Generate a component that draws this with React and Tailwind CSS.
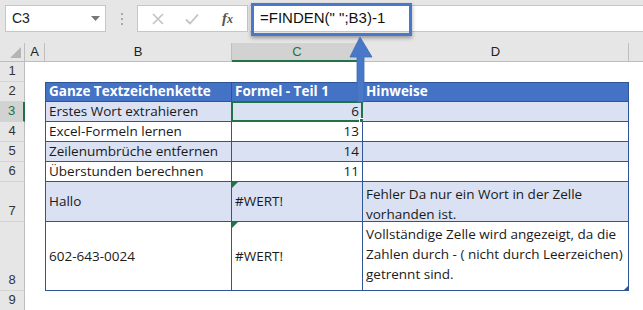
import React from 'react'

const COLS = [
  { key: 'A', w: 'w-[20px]' },
  { key: 'B', w: 'w-[187px]' },
  { key: 'C', w: 'w-[131px]' },
  { key: 'D', w: 'w-[266px]' },
]

const rows = [
  { n: 1, h: 'h-[20px]' },
  { n: 2, h: 'h-[20px]', head: true },
  { n: 3, h: 'h-[20px]', band: true, b: 'Erstes Wort extrahieren', c: '6' },
  { n: 4, h: 'h-[20px]', b: 'Excel-Formeln lernen', c: '13' },
  { n: 5, h: 'h-[20px]', band: true, b: 'Zeilenumbrüche entfernen', c: '14' },
  { n: 6, h: 'h-[20px]', b: 'Überstunden berechnen', c: '11' },
  {
    n: 7,
    h: 'h-[40px]',
    band: true,
    b: 'Hallo',
    c: '#WERT!',
    err: true,
    d: ['Fehler Da nur ein Wort in der Zelle', 'vorhanden ist.'],
  },
  {
    n: 8,
    h: 'h-[69px]',
    b: '602-643-0024',
    c: '#WERT!',
    err: true,
    d: [
      'Vollständige Zelle wird angezeigt, da die',
      'Zahlen durch - ( nicht durch Leerzeichen)',
      'getrennt sind.',
    ],
  },
  { n: 9, h: 'h-[20px]' },
]

const cellFont = "font-['Open_Sans',sans-serif] text-[13.5px] text-[#1a1a1a]"

const RowHeader = ({ n, h }) => {
  const active = n === 3
  return (
    <div
      className={`${h} w-[25px] shrink-0 flex items-end justify-center pb-[1px] border-b border-[#d4d4d4] font-['Liberation_Sans',sans-serif] text-[13px] ${
        active
          ? 'bg-[#d2d2d2] text-[#217346] border-r-2 border-r-[#217346]'
          : 'bg-[#e6e6e6] text-[#333] border-r border-r-[#bdbdbd]'
      }`}
    >
      {n}
    </div>
  )
}

const TableRow = ({ row }) => {
  if (!row.head && !row.b) {
    return <div className="flex-1" />
  }
  const bg = row.head ? 'bg-[#4472c4]' : row.band ? 'bg-[#d9e1f2]' : 'bg-white'
  const border = `border-[#2f5597] border-b border-r ${row.head ? 'border-t' : ''}`
  const tall = row.n >= 7

  if (row.head) {
    return (
      <>
        <div className={`w-[187px] shrink-0 ${bg} ${border} border-l flex items-end px-[3px] text-white font-bold font-['Open_Sans',sans-serif] text-[13.5px]`}>
          Ganze Textzeichenkette
        </div>
        <div className={`w-[131px] shrink-0 ${bg} ${border} flex items-end px-[3px] text-white font-bold font-['Open_Sans',sans-serif] text-[13.5px]`}>
          Formel - Teil 1
        </div>
        <div className={`w-[266px] shrink-0 ${bg} ${border} flex items-end px-[3px] text-white font-bold font-['Open_Sans',sans-serif] text-[13.5px]`}>
          Hinweise
        </div>
      </>
    )
  }

  return (
    <>
      <div className={`w-[187px] shrink-0 ${bg} ${border} border-l flex ${tall ? 'items-center' : 'items-end'} px-[3px] ${cellFont} whitespace-nowrap leading-[19px]`}>
        {row.b}
      </div>
      <div className={`relative w-[131px] shrink-0 ${bg} ${border} flex ${tall ? 'items-center justify-start' : 'items-end justify-end'} px-[3px] ${cellFont} leading-[19px]`}>
        {row.c}
        {row.err && (
          <div className="absolute left-0 top-0 w-0 h-0 border-t-[6px] border-t-[#217346] border-r-[6px] border-r-transparent" />
        )}
        {row.n === 3 && (
          <>
            <div className="absolute -left-[1px] -top-[1px] -right-[1px] -bottom-[1px] border-2 border-[#217346]" />
            <div className="absolute -right-[4px] -bottom-[4px] w-[7px] h-[7px] bg-[#217346] border border-white" />
          </>
        )}
      </div>
      <div className={`relative w-[266px] shrink-0 ${bg} ${border} px-[3px] pt-[2px] ${cellFont} leading-[20px] whitespace-nowrap`}>
        {row.d && row.d.map((line, i) => <div key={i}>{line}</div>)}
        {row.n === 8 && (
          <div className="absolute right-0 bottom-0 w-0 h-0 border-b-[4px] border-b-[#2f5597] border-l-[4px] border-l-transparent" />
        )}
      </div>
    </>
  )
}

const App = () => {
  return (
    <div className="relative w-[643px] h-[310px] overflow-hidden bg-white">
      {/* formula toolbar */}
      <div className="h-[43px] bg-[#e6e6e6] flex items-start pt-[5px]">
        <div className="ml-[5px] w-[101px] h-[27px] bg-white border border-[#c6c6c6] flex items-center justify-between pl-[6px] pr-[5px] font-['Liberation_Sans',sans-serif] text-[14px] text-[#222]">
          <span>C3</span>
          <svg width="9" height="5" viewBox="0 0 9 5">
            <path d="M0 0 L9 0 L4.5 5 Z" fill="#777" />
          </svg>
        </div>
        <div className="w-[31px] h-[27px] flex flex-col items-center justify-center gap-[3px]">
          <span className="w-[2px] h-[2px] bg-[#a8a8a8]" />
          <span className="w-[2px] h-[2px] bg-[#a8a8a8]" />
          <span className="w-[2px] h-[2px] bg-[#a8a8a8]" />
        </div>
        <div className="w-[111px] h-[27px] bg-white border border-[#c6c6c6] flex items-center pl-[14px]">
          <svg width="12" height="12" viewBox="0 0 12 12" className="mr-[21px]">
            <path d="M1 1 L11 11 M11 1 L1 11" stroke="#c2c2c2" strokeWidth="1.6" />
          </svg>
          <svg width="14" height="12" viewBox="0 0 14 12" className="mr-[23px]">
            <path d="M1 6.5 L5 10.5 L13 1.5" stroke="#c2c2c2" strokeWidth="1.8" fill="none" />
          </svg>
          <span className="font-['Liberation_Serif',serif] italic font-bold text-[15px] text-[#555] leading-none">
            f<span className="text-[12px]">x</span>
          </span>
        </div>
        <div className="ml-[2px] flex-1 h-[27px] bg-white border-y border-[#c6c6c6] flex items-center pl-[10px] font-['Liberation_Sans',sans-serif] text-[15px] text-[#111] whitespace-nowrap">
          =FINDEN(" ";B3)-1
        </div>
      </div>

      {/* column headers */}
      <div className="flex h-[19px]">
        <div className="relative w-[25px] shrink-0 bg-[#e6e6e6] border-r border-b border-[#bdbdbd]">
          <div className="absolute right-[3px] bottom-[3px] w-0 h-0 border-b-[11px] border-b-[#b4b4b4] border-l-[11px] border-l-transparent" />
        </div>
        {COLS.map((c) => (
          <div
            key={c.key}
            className={`${c.w} shrink-0 flex items-center justify-center font-['Liberation_Sans',sans-serif] text-[13px] ${
              c.key === 'C'
                ? 'bg-[#d2d2d2] text-[#217346] border-r border-r-[#bdbdbd] border-b-2 border-b-[#217346]'
                : 'bg-[#e6e6e6] text-[#222] border-r border-b border-[#bdbdbd]'
            }`}
          >
            {c.key}
          </div>
        ))}
        <div className="flex-1 bg-[#e6e6e6] border-b border-[#bdbdbd]" />
      </div>

      {/* sheet rows */}
      {rows.map((row) => (
        <div key={row.n} className={`flex ${row.h}`}>
          <RowHeader n={row.n} h={row.h} />
          <div className="w-[20px] shrink-0" />
          <TableRow row={row} />
        </div>
      ))}

      {/* callout box around formula */}
      <div className="absolute left-[251px] top-[3px] w-[161px] h-[33px] border-[3px] border-[#4a78c8] shadow-[0_2px_4px_rgba(0,0,0,0.35)]" />

      {/* arrow */}
      <svg className="absolute left-[348px] top-[36px]" width="26" height="68" viewBox="0 0 26 68">
        <path d="M12 1 L24 21 L16 21 L16 66 L9 66 L9 21 L2 21 Z" fill="#4a78c8" stroke="#3f69b5" strokeWidth="0.8" />
      </svg>
    </div>
  )
}

export default App
